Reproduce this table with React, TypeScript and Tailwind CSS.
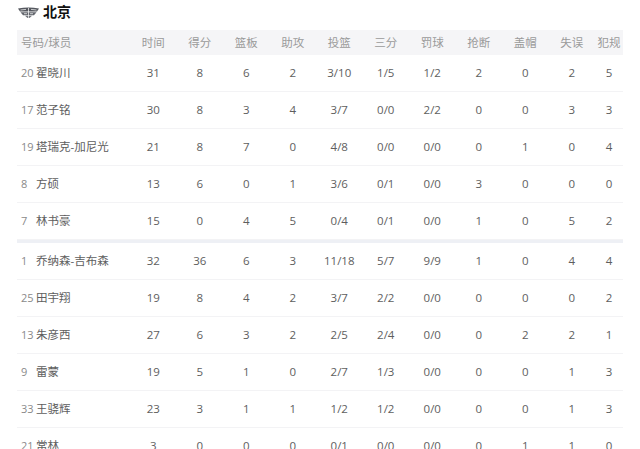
import React from "react";

const headers = ["时间", "得分", "篮板", "助攻", "投篮", "三分", "罚球", "抢断", "盖帽", "失误", "犯规"];

type Row = [string, string, ...string[]];

const starters: Row[] = [
  ["20", "翟晓川", "31", "8", "6", "2", "3/10", "1/5", "1/2", "2", "0", "2", "5"],
  ["17", "范子铭", "30", "8", "3", "4", "3/7", "0/0", "2/2", "0", "0", "3", "3"],
  ["19", "塔瑞克-加尼光", "21", "8", "7", "0", "4/8", "0/0", "0/0", "0", "1", "0", "4"],
  ["8", "方硕", "13", "6", "0", "1", "3/6", "0/1", "0/0", "3", "0", "0", "0"],
  ["7", "林书豪", "15", "0", "4", "5", "0/4", "0/1", "0/0", "1", "0", "5", "2"],
];

const bench: Row[] = [
  ["1", "乔纳森-吉布森", "32", "36", "6", "3", "11/18", "5/7", "9/9", "1", "0", "4", "4"],
  ["25", "田宇翔", "19", "8", "4", "2", "3/7", "2/2", "0/0", "0", "0", "0", "2"],
  ["13", "朱彦西", "27", "6", "3", "2", "2/5", "2/4", "0/0", "0", "2", "2", "1"],
  ["9", "雷蒙", "19", "5", "1", "0", "2/7", "1/3", "0/0", "0", "0", "1", "3"],
  ["33", "王骁辉", "23", "3", "1", "1", "1/2", "1/2", "0/0", "0", "0", "1", "3"],
  ["21", "常林", "3", "0", "0", "0", "0/1", "0/0", "0/0", "0", "1", "1", "0"],
];

const grid = "grid grid-cols-[113px_repeat(10,46.5px)_28px]";

function Logo() {
  return (
    <svg width="21" height="11" viewBox="0 0 21 11">
      <path d="M0 1.5 Q10.5 -0.5 21 1.5 L19 4.5 L2 4.5 Z" fill="#55585f" />
      <path d="M2.5 5.2 L18.5 5.2 L16 8.2 L5 8.2 Z" fill="#62656c" />
      <path d="M7 8.7 L14 8.7 L11.5 11 L9.5 11 Z" fill="#72757c" />
      <path d="M2.5 3 L8 2.4 M13 2.4 L18.5 3 M6 6.7 L9 6.7 M12 6.7 L15 6.7" stroke="#fff" strokeWidth="0.7" />
      <path d="M10.5 1 L10.5 11" stroke="#fff" strokeWidth="0.7" />
    </svg>
  );
}

function DataRow({ r }: { r: Row }) {
  const [num, name, ...stats] = r;
  return (
    <div className={`${grid} h-[37px] items-center border-b border-[#f3f3f5] text-[11.5px] text-[#5e5e5e]`}>
      <div className="pl-[4px] flex items-center whitespace-nowrap">
        <span className="inline-block w-[15px] text-[#8a8a8a] text-[11px]">{num}</span>
        <span>{name}</span>
      </div>
      {stats.map((s, i) => (
        <div key={i} className="text-center">
          {s}
        </div>
      ))}
    </div>
  );
}

export default function App() {
  return (
    <div
      className="w-[640px] h-[449px] overflow-hidden bg-white"
      style={{ fontFamily: '"Open Sans", "Noto Sans CJK SC", sans-serif' }}
    >
      <div className="h-[30px] pl-[18px] flex items-start pt-[2px] gap-[4px]">
        <div className="pt-[5px]">
          <Logo />
        </div>
        <span className="text-[14px] font-bold text-[#111] leading-[20px]">北京</span>
      </div>
      <div className="ml-[17px] w-[606px]">
        <div className={`${grid} h-[25px] items-center bg-[#f5f5f7] text-[11.5px] text-[#9a9a9a]`}>
          <div className="pl-[4px]">号码/球员</div>
          {headers.map((h) => (
            <div key={h} className="text-center">
              {h}
            </div>
          ))}
        </div>
        {starters.map((r) => (
          <DataRow key={r[0]} r={r} />
        ))}
        <div className="h-[3px] bg-[#eef0f5]" />
        {bench.map((r) => (
          <DataRow key={r[0]} r={r} />
        ))}
      </div>
    </div>
  );
}
